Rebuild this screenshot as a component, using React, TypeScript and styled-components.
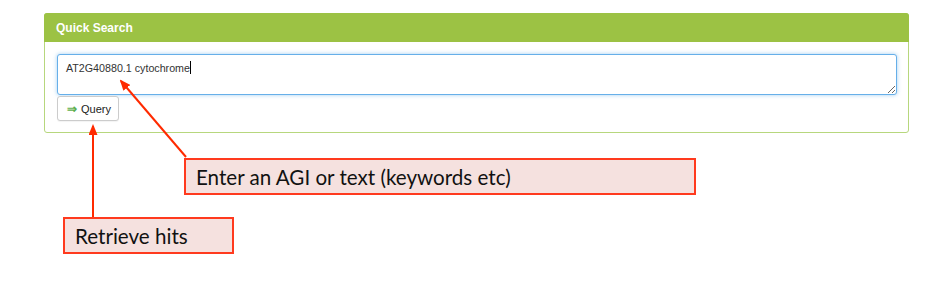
import React from "react";
import styled, { createGlobalStyle } from "styled-components";

const GlobalStyle = createGlobalStyle`
    html, body {
        margin: 0;
        padding: 0;
        background: #ffffff;
    }
`;

const Page = styled.div`
    position: relative;
    width: 952px;
    height: 282px;
    padding: 13px 0 0 44px;
    box-sizing: border-box;
    overflow: hidden;
    font-family: "Liberation Sans", Arial, sans-serif;
`;

const Panel = styled.section`
    width: 865px;
    border: 1px solid #b7d77d;
    border-radius: 3px;
    box-sizing: border-box;
    background: #ffffff;
`;

const PanelHeader = styled.div`
    display: flex;
    align-items: center;
    height: 29px;
    padding: 0 12px;
    margin: -1px -1px 0;
    background: #9cc244;
    border-radius: 3px 3px 0 0;
    color: #ffffff;
    font-size: 12px;
    font-weight: bold;
`;

const PanelBody = styled.div`
    display: flex;
    flex-direction: column;
    align-items: flex-start;
    padding: 12px 10px 11px 12px;
`;

const SearchBox = styled.textarea`
    width: 840px;
    height: 41px;
    box-sizing: border-box;
    padding: 7px 8px;
    border: 1px solid #66afe9;
    border-radius: 3px;
    box-shadow: 0 0 4px rgba(102, 175, 233, 0.6);
    outline: none;
    font-family: "Liberation Sans", Arial, sans-serif;
    font-size: 10.7px;
    color: #333333;
`;

const QueryButton = styled.button`
    display: flex;
    align-items: center;
    gap: 4px;
    width: 62px;
    height: 25px;
    margin-top: 1px;
    padding: 0 0 0 9px;
    border: 1px solid #cccccc;
    border-radius: 3px;
    background: #ffffff;
    font-family: "Liberation Sans", Arial, sans-serif;
    font-size: 11px;
    color: #222222;
    box-shadow: 0 1px 1px rgba(0, 0, 0, 0.05);
`;

const GoArrow = styled.span`
    color: #5cae4c;
    font-size: 12px;
    font-weight: bold;
`;

const Callout = styled.div<{ $left: number; $top: number; $width: number }>`
    display: flex;
    align-items: center;
    width: ${(p) => p.$width}px;
    height: 37px;
    margin-left: ${(p) => p.$left - 44}px;
    margin-top: ${(p) => p.$top}px;
    padding-left: 10px;
    box-sizing: border-box;
    background: #f5e1df;
    border: 2px solid #ff3a1e;
    font-family: Lato, "Open Sans", sans-serif;
    font-size: 20.6px;
    color: #111111;
`;

const Arrows = styled.svg`
    position: absolute;
    left: 0;
    top: 0;
    pointer-events: none;
`;

const Caret = styled.span`
    position: absolute;
    left: 190px;
    top: 61px;
    width: 1px;
    height: 13px;
    background: #000;
`;

export default function App() {
    return (
        <>
            <GlobalStyle />
            <Page>
                <Panel>
                    <PanelHeader>Quick Search</PanelHeader>
                    <PanelBody>
                        <SearchBox readOnly defaultValue="AT2G40880.1 cytochrome" />
                        <QueryButton>
                            <GoArrow>⇒</GoArrow>Query
                        </QueryButton>
                    </PanelBody>
                </Panel>
                <Callout $left={184} $top={25} $width={512}>
                    Enter an AGI or text (keywords etc)
                </Callout>
                <Callout $left={63} $top={22} $width={171}>
                    Retrieve hits
                </Callout>
                <Caret />
                <Arrows width="952" height="282" viewBox="0 0 952 282">
                    <defs>
                        <marker id="head" markerWidth="11" markerHeight="9" refX="9" refY="4.5" orient="auto" markerUnits="userSpaceOnUse">
                            <path d="M0,0 L11,4.5 L0,9 Z" fill="#ff2a00" />
                        </marker>
                    </defs>
                    <line x1="186" y1="157" x2="121" y2="81" stroke="#ff2a00" strokeWidth="2" markerEnd="url(#head)" />
                    <line x1="93" y1="217" x2="93" y2="126" stroke="#ff2a00" strokeWidth="2" markerEnd="url(#head)" />
                </Arrows>
            </Page>
        </>
    );
}
